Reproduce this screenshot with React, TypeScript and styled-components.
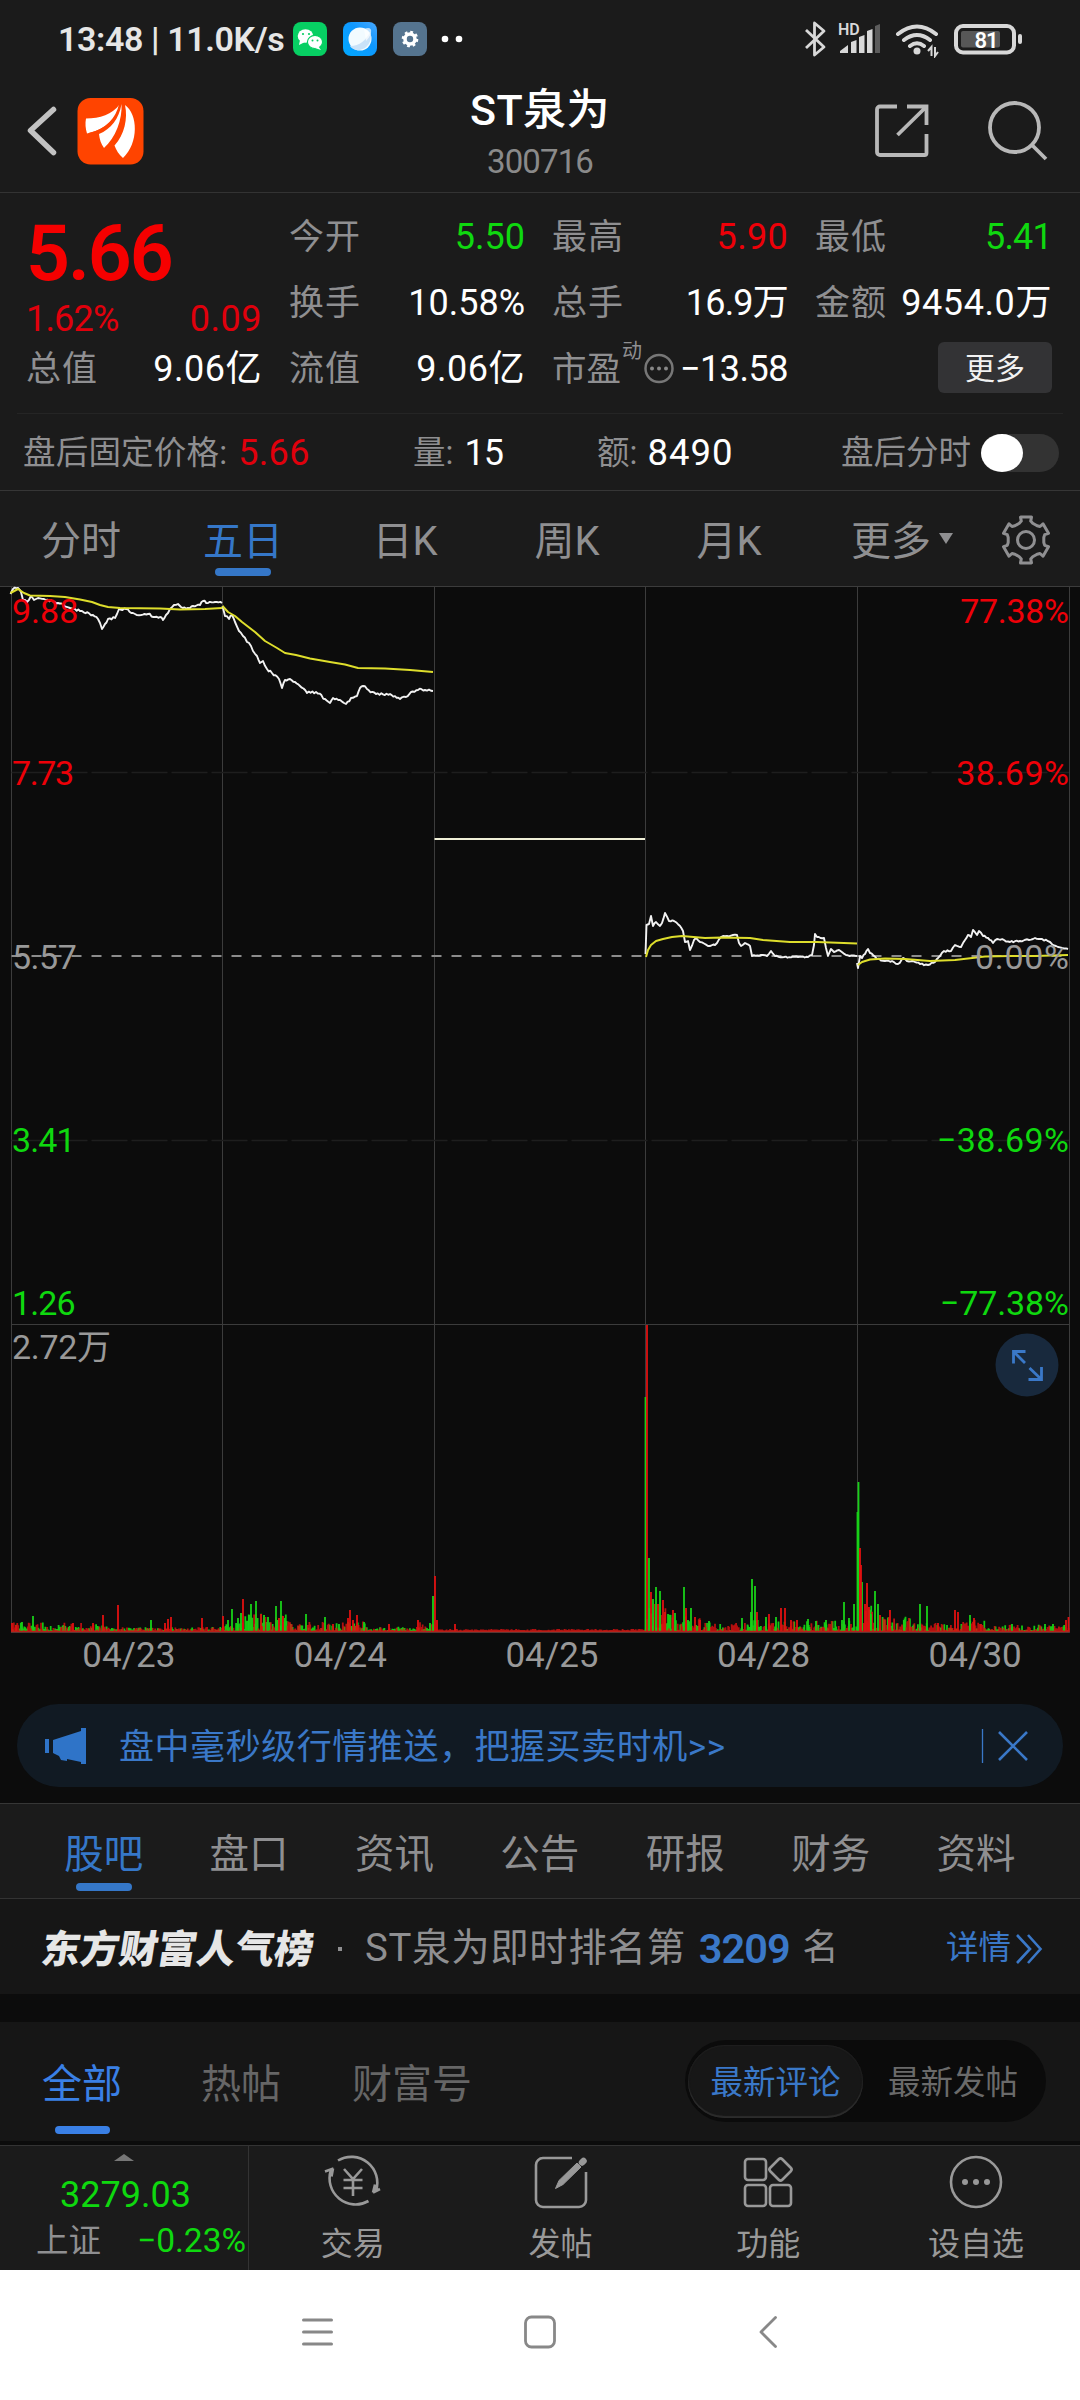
import React from "react";
import styled, { createGlobalStyle } from "styled-components";

const RED = "#ee0008";
const GREEN = "#0fd80f";
const BLUE = "#3577c8";
const GREY = "#8f8f91";

const Global = createGlobalStyle`
  body { margin: 0; background: #0c0c0c; }
  * { box-sizing: border-box; }
`;

const Screen = styled.div`
  width: 1080px;
  height: 2400px;
  display: flex;
  flex-direction: column;
  background: #0c0c0c;
  overflow: hidden;
  font-family: Roboto, "Noto Sans CJK SC", sans-serif;
  white-space: nowrap;
`;

const Text = styled.span<{ $size: number; $color?: string; $weight?: number; $ls?: number }>`
  font-size: ${(p) => p.$size}px;
  color: ${(p) => p.$color ?? GREY};
  font-weight: ${(p) => p.$weight ?? 400};
  letter-spacing: ${(p) => p.$ls ?? 0}px;
  line-height: 1.1;
`;

/* ---------- status bar ---------- */
const StatusBar = styled.div`
  height: 78px;
  flex: none;
  background: #1b1b1b;
  display: flex;
  align-items: center;
  padding: 0 57px 0 58px;
`;
const Clock = styled(Text)`
  width: 228px;
  padding-top: 2px;
`;
const StatusIcons = styled.svg`
  margin-left: 7px;
  flex: none;
`;
const Spacer = styled.div`
  flex: 1;
`;

/* ---------- header ---------- */
const Header = styled.header`
  height: 115px;
  flex: none;
  background: #1b1b1b;
  border-bottom: 1px solid #333;
  display: grid;
  grid-template-columns: 360px 1fr 360px;
`;
const HeaderSide = styled.div`
  display: flex;
  align-items: flex-start;
`;
const TitleBlock = styled.div`
  display: flex;
  flex-direction: column;
  align-items: center;
  padding-top: 9px;
  gap: 10px;
`;

/* ---------- quote ---------- */
const Quote = styled.section`
  height: 220px;
  flex: none;
  background: #1b1b1b;
  padding: 12px 28px 0 26px;
  display: grid;
  grid-template-columns: 236px 236px 236px 237px;
  column-gap: 27px;
`;
const QuoteColumn = styled.div`
  display: flex;
  flex-direction: column;
`;
const QuoteCell = styled.div<{ $h?: number }>`
  height: ${(p) => p.$h ?? 66}px;
  display: flex;
  align-items: center;
  justify-content: space-between;
`;
const Label = styled(Text).attrs({ $size: 35, $ls: 1 })``;
const PeLabel = styled.div`
  display: flex;
  align-items: center;
  gap: 1px;
`;
const Sup = styled(Text)`
  align-self: flex-start;
  margin-top: -11px;
`;
const PeIcon = styled.svg`
  margin-top: -3px;
`;
const MoreButton = styled.button`
  width: 114px;
  height: 51px;
  border: 0;
  border-radius: 6px;
  margin-left: auto;
  margin-top: -5px;
  background: #333335;
  padding: 2px 0 0;
  font-family: inherit;
`;

const AfterHours = styled.section`
  height: 78px;
  flex: none;
  background: #1b1b1b;
  border-bottom: 1px solid #363636;
  padding: 0 17px;
`;
const AfterInner = styled.div`
  height: 77px;
  border-top: 1px solid #252525;
  padding: 2px 4px 0 6px;
  display: grid;
  grid-template-columns: 390px 184px 244px 1fr;
  align-items: center;
`;
const Pair = styled.div<{ $gap: number }>`
  display: flex;
  align-items: center;
  gap: ${(p) => p.$gap}px;
  padding-top: 1px;
`;
const Track = styled.div`
  width: 78px;
  height: 38px;
  border-radius: 19px;
  background: #333;
  margin-top: -2px;
`;
const Knob = styled.div`
  width: 42px;
  height: 38px;
  border-radius: 50%;
  background: #fff;
`;

/* ---------- tabs ---------- */
const TabBar = styled.nav<{ $pad: number; $line?: boolean }>`
  height: 95px;
  flex: none;
  background: #1b1b1b;
  border-top: ${(p) => (p.$line ? "1px solid #363636" : "none")};
  display: flex;
  padding: 0 ${(p) => p.$pad}px;
`;
const Tab = styled.div<{ $w: number; $active?: boolean; $bar: number; $top?: number }>`
  width: ${(p) => p.$w}px;
  position: relative;
  display: flex;
  align-items: center;
  justify-content: center;
  padding-top: ${(p) => p.$top ?? 3}px;
  &::after {
    content: "";
    display: ${(p) => (p.$active ? "block" : "none")};
    position: absolute;
    left: calc(50% - 28px);
    bottom: ${(p) => p.$bar}px;
    width: 56px;
    height: 8px;
    border-radius: 4px;
    background: ${BLUE};
  }
`;
const Caret = styled.i`
  position: absolute;
  left: 129px;
  top: 42px;
  border: 7.5px solid transparent;
  border-top: 11px solid ${GREY};
  border-bottom: 0;
`;

/* ---------- chart ---------- */
const Chart = styled.section`
  height: 1118px;
  flex: none;
  position: relative;
`;
const ChartSvg = styled.svg`
  display: block;
`;
const Axis = styled.div<{ $y: number; $side: "left" | "right"; $color: string; $ls: number }>`
  position: absolute;
  top: ${(p) => p.$y - 586 - 20}px;
  ${(p) => p.$side}: ${(p) => (p.$side === "left" ? 12 : 11 - p.$ls)}px;
  line-height: 40px;
  font-size: 34px;
  letter-spacing: ${(p) => p.$ls}px;
  color: ${(p) => p.$color};
`;
const Dates = styled.div`
  display: grid;
  grid-template-columns: repeat(5, 211.6px);
  padding-left: 23px;
  text-align: center;
  font-size: 35px;
  line-height: 40px;
  color: #999;
  padding-top: 2px;
`;
const Expand = styled.svg`
  position: absolute;
  left: 995px;
  top: 747px;
`;

/* ---------- banner ---------- */
const BannerWrap = styled.div`
  height: 99px;
  flex: none;
  padding: 0 17px;
`;
const Banner = styled.div`
  height: 83px;
  border-radius: 42px;
  background: #111a23;
  display: flex;
  align-items: center;
  padding-left: 28px;
`;
const BannerText = styled(Text)`
  margin-left: 32px;
  padding-top: 5px;
  flex: 1;
`;
const BannerClose = styled.svg`
  margin-right: 34px;
`;

/* ---------- rank ---------- */
const Rank = styled.div`
  height: 96px;
  flex: none;
  background: #161616;
  border-top: 1px solid #333;
  display: flex;
  align-items: center;
  padding: 4px 36px 0 42px;
`;
const RankTitle = styled.span`
  font-size: 38.8px;
  font-weight: 900;
  line-height: 44px;
  color: #e6e6e6;
  transform: skewX(-9deg);
  width: 274px;
  padding-top: 3px;
`;
const Dot = styled.i`
  width: 4px;
  height: 4px;
  background: ${GREY};
  margin: 0 23px 0 22px;
`;
const RankNo = styled(Text)`
  margin: 0 13px;
`;

/* ---------- posts ---------- */
const Posts = styled.div`
  height: 119px;
  flex: none;
  margin-top: 28px;
  background: #161616;
  display: flex;
  padding: 0 34px 0 42px;
`;
const PostTab = styled.div<{ $gap: number; $active?: boolean }>`
  position: relative;
  padding-top: 41px;
  margin-right: ${(p) => p.$gap}px;
  &::after {
    content: "";
    display: ${(p) => (p.$active ? "block" : "none")};
    position: absolute;
    left: 13px;
    top: 104px;
    width: 55px;
    height: 8px;
    border-radius: 4px;
    background: #3a80e6;
  }
`;
const Segmented = styled.div`
  margin: 18px 0 0 auto;
  width: 361px;
  height: 82px;
  border-radius: 41px;
  background: #0b0b0b;
  padding: 5px 3px;
  display: flex;
`;
const Segment = styled.div<{ $on?: boolean }>`
  width: ${(p) => (p.$on ? 175 : 180)}px;
  height: 73px;
  border-radius: 37px;
  padding-top: 4px;
  display: flex;
  align-items: center;
  justify-content: center;
  background: ${(p) => (p.$on ? "#171717" : "transparent")};
  box-shadow: ${(p) => (p.$on ? "inset 0 -2px 1px #2c2c2c, inset 0 0 1px 1px #1e1e1e" : "none")};
`;

/* ---------- bottom ---------- */
const Bottom = styled.footer`
  height: 125px;
  flex: none;
  margin-top: 4px;
  background: #1b1b1b;
  border-top: 1px solid #333;
  display: flex;
`;
const IndexCell = styled.div`
  width: 249px;
  border-right: 1px solid #333;
  display: flex;
  flex-direction: column;
  align-items: center;
`;
const Up = styled.i`
  margin: 8px 0 0 0;
  border: 10px solid transparent;
  border-top: 0;
  border-bottom: 7px solid #777;
`;
const IndexValue = styled(Text)`
  margin: 13px 0 0 3px;
  line-height: 42px;
`;
const IndexRow = styled.div`
  width: 100%;
  display: flex;
  align-items: center;
  justify-content: space-between;
  padding: 7px 2px 0 36px;
`;
const Action = styled.div`
  flex: 1;
  display: flex;
  flex-direction: column;
  align-items: center;
  padding-top: 7px;
  gap: 16px;
`;
const SystemNav = styled.div`
  height: 130px;
  flex: none;
  background: #fff;
  display: grid;
  grid-template-columns: 1fr 32px 1fr;
  align-items: center;
  padding-bottom: 6px;
`;
const NavItem = styled.div<{ $left?: number }>`
  padding-left: ${(p) => p.$left ?? 0}px;
  display: flex;
`;

/* ---------- chart data ---------- */
const X = [11.5, 222.5, 434.5, 645.5, 857.5, 1069.5];
const BASE = 1632;

const jitter = (pts: number[][], seed: number, amp: number) => {
  let s = seed;
  const rnd = () => ((s = (s * 16807) % 2147483647) / 2147483647 - 0.5) * 2;
  const out: string[] = [];
  for (let i = 0; i < pts.length - 1; i++) {
    const [x0, y0] = pts[i];
    const [x1, y1] = pts[i + 1];
    const n = Math.max(1, Math.round((x1 - x0) / 1.8));
    for (let k = 0; k < n; k++) {
      const t = k / n;
      out.push(`${(x0 + (x1 - x0) * t).toFixed(1)},${(y0 + (y1 - y0) * t + (k ? rnd() * amp : 0)).toFixed(1)}`);
    }
  }
  out.push(pts[pts.length - 1].join(","));
  return out.join(" ");
};

const day1 = [[10.5, 594], [13, 589], [18, 588], [21, 592], [23, 600], [27, 602], [31, 596], [34, 600], [38, 598], [46, 600], [58, 603], [70, 608], [80, 611], [93, 615], [98, 619], [100, 623], [102, 629], [105, 624], [108, 619], [115, 618], [119, 609], [126, 609], [133, 613], [141, 615], [148, 614], [155, 617], [160, 617], [163, 620], [166, 615], [170, 609], [174, 605], [178, 604], [181, 607], [188, 608], [193, 606], [200, 605], [203, 601], [208, 603], [215, 602], [222, 603]];
const day2 = [[222.5, 606], [225, 616], [229, 619], [232, 615], [235, 622], [239, 631], [243, 636], [247, 642], [251, 646], [253, 651], [257, 656], [260, 663], [263, 661], [267, 669], [272, 673], [279, 679], [282, 688], [285, 680], [290, 679], [295, 682], [300, 686], [307, 693], [316, 692], [325, 699], [330, 703], [333, 698], [340, 700], [346, 704], [351, 698], [357, 696], [360, 688], [363, 686], [367, 689], [376, 694], [390, 694], [400, 699], [406, 697], [411, 692], [418, 690], [425, 690], [433, 691]];
const day4 = [[645.5, 954], [646.5, 925], [649, 924], [651, 916], [653, 926], [656, 922], [660, 926], [662, 923], [665, 913], [669, 921], [674, 921], [680, 926], [683, 931], [685, 942], [688, 941], [690, 950], [694, 940], [696, 938], [700, 942], [708, 946], [715, 945], [721, 937], [727, 936], [733, 935], [737, 935], [739, 943], [741, 946], [745, 943], [750, 946], [752, 956], [761, 955], [767, 956], [771, 951], [775, 956], [784, 957], [798, 957], [808, 957], [812, 955], [814, 945], [815, 934], [817, 937], [824, 938], [826, 948], [828, 956], [831, 949], [834, 952], [839, 950], [846, 955], [857, 956]];
const day5 = [[857, 963], [858, 968], [860, 956], [862, 958], [865, 954], [868, 949], [870, 953], [873, 955], [877, 959], [885, 961], [892, 961], [898, 964], [903, 958], [907, 961], [913, 961], [920, 964], [928, 965], [935, 962], [940, 956], [944, 951], [951, 951], [955, 945], [961, 947], [965, 940], [968, 935], [971, 937], [973, 930], [977, 935], [979, 931], [983, 936], [988, 938], [993, 943], [997, 939], [1004, 940], [1010, 942], [1020, 941], [1029, 940], [1035, 938], [1042, 939], [1050, 942], [1056, 946], [1062, 948], [1068, 949]];
const whites = [jitter(day1, 11, 1.1), jitter(day2, 23, 1.3), jitter(day4, 5, 0.8), jitter(day5, 77, 0.9)];

const yellows = [
  "10.5,593 18,589 24,593 30,595.5 50,596 65,597 80,599.5 92,602 100,605 108,607 120,608 160,608.5 180,609.5 205,609 222,608",
  "222.5,606 228,612 235,616 242,622 255,632 265,641 277,648 285,653 296,655 310,658.5 330,662 345,664.5 358,668 385,668.5 410,670 433,672",
  "646,957 648,950 651,945 656,941 663,939 672,937 682,936 705,938 722,937.5 750,938 763,940 790,942 817,942 857,943.5",
  "858,965 862,962 870,959.5 885,958.5 905,959 930,961 955,960 968,958.5 985,956.5 1010,956 1035,956 1068,955",
];

type Bar = [number, number, boolean];
// x, height, isGreen
const peaks: Bar[] = [
  [12, 9, false], [16, 7, false], [22, 10, true], [33, 16, true], [73, 9, false], [93, 9, false], [103, 17, false], [118, 27, false], [151, 12, true], [165, 9, false], [168, 13, false], [171, 15, false], [202, 14, false], [223, 16, false],
  [228, 12, true], [232, 23, true], [238, 14, true], [243, 33, false], [241, 19, true], [251, 28, true], [256, 31, true], [249, 17, true], [261, 18, false], [264, 17, true], [268, 15, true], [276, 26, true], [281, 31, true], [283, 16, false], [279, 14, false], [306, 18, true], [325, 15, true], [333, 8, false], [339, 8, true], [348, 14, false], [350, 22, false], [353, 12, false], [357, 17, false], [364, 10, true], [389, 8, false], [418, 12, false], [430, 9, true], [433, 36, true], [435, 56, false], [437, 12, false], [455, 8, false],
  [645.5, 235, true], [647, 307, false], [649, 74, true], [651, 40, false], [653, 33, true], [656, 45, true], [658, 28, false], [660, 41, true], [663, 32, false], [665, 20, false], [673, 22, false], [675, 19, true], [684, 45, true], [686, 24, false], [688, 12, true], [691, 24, true], [695, 15, false], [700, 12, false], [709, 11, true], [742, 14, true], [751, 20, true], [752, 53, true], [755, 46, true], [757, 20, false], [766, 15, true], [769, 18, false], [776, 15, true], [781, 24, false], [785, 24, false], [791, 12, false], [797, 12, false], [808, 13, true], [816, 11, true], [826, 12, true], [842, 12, true], [844, 30, true], [849, 14, true], [854, 28, true],
  [857.5, 120, true], [858.5, 150, true], [860, 84, false], [861, 67, false], [862, 50, true], [865, 28, false], [867, 49, false], [869, 25, false], [871, 18, true], [875, 41, true], [878, 28, true], [880, 17, false], [889, 13, false], [890, 22, false], [904, 12, true], [920, 28, true], [927, 26, true], [938, 9, false], [955, 22, false], [958, 20, false], [970, 17, true], [974, 14, false], [981, 8, false], [1012, 8, true], [1045, 8, true], [1053, 8, true], [1066, 12, false], [1068.5, 15, false],
];
const zones: [number, number, number, number][] = [
  [12, 60, 8, 0.6], [60, 120, 8, 0.5], [120, 222, 3.5, 0.4], [222, 240, 9, 0.6], [240, 290, 17, 0.6], [290, 365, 9, 0.5], [365, 420, 4, 0.5], [420, 434, 9, 0.5], [436, 645, 1.6, 0],
  [646, 668, 27, 0.5], [668, 700, 16, 0.5], [700, 748, 8, 0.3], [748, 760, 16, 0.6], [760, 800, 9, 0.4], [800, 857, 10, 0.5], [858, 880, 27, 0.4], [880, 910, 14, 0.4], [910, 950, 8, 0.3], [950, 985, 11, 0.3], [985, 1069, 6, 0.5],
];
const noise: Bar[] = (() => {
  let s = 4242;
  const rnd = () => (s = (s * 16807) % 2147483647) / 2147483647;
  const out: Bar[] = [];
  zones.forEach(([a, b, h, g]) => {
    for (let x = a; x < b; x += 0.88) out.push([x, 1.5 + h * Math.pow(rnd(), 1.7), rnd() < g]);
  });
  return out;
})();
const barPath = (green: boolean, bars: Bar[]) =>
  bars.filter((b) => b[2] === green).map(([x, h]) => `M${x.toFixed(1)} ${BASE}v${(-h).toFixed(1)}`).join("");

const axis: [number, "left" | "right", string, string, number][] = [
  [611, "left", RED, "9.88", 0], [773, "left", RED, "7.73", -1.4], [957, "left", "#999", "5.57", -0.5], [1140, "left", GREEN, "3.41", -0.9], [1303, "left", GREEN, "1.26", -0.9], [1347, "left", "#999", "2.72万", -0.3],
  [611, "right", RED, "77.38%", -0.3], [773, "right", RED, "38.69%", 0.5], [957, "right", "#999", "0.00%", 0.7], [1140, "right", GREEN, "−38.69%", 0.4], [1303, "right", GREEN, "−77.38%", -0.1],
];

const GearIcon = () => {
  const pts: string[] = [];
  for (let i = 0; i < 6; i++) {
    const a = i * 60 - 90;
    [[-22, 18], [-14, 19.5], [-13.5, 23.5], [13.5, 23.5], [14, 19.5], [22, 18]].forEach(([d, r]) => {
      const rad = ((a + d) * Math.PI) / 180;
      pts.push(`${(26 + r * Math.cos(rad)).toFixed(1)},${(26 + r * Math.sin(rad)).toFixed(1)}`);
    });
  }
  return (
    <svg width="52" height="52" fill="none" stroke={GREY} strokeWidth="3" strokeLinejoin="round">
      <polygon points={pts.join(" ")} />
      <circle cx="26" cy="26" r="8.5" />
    </svg>
  );
};

type Datum = [string, string, string, number];
const quoteColumns: Datum[][] = [
  [["今开", "5.50", GREEN, 0], ["换手", "10.58%", "#fff", 0], ["流值", "9.06亿", "#fff", 0.5]],
  [["最高", "5.90", RED, 0.3], ["总手", "16.9万", "#fff", -0.8]],
  [["最低", "5.41", GREEN, -0.8], ["金额", "9454.0万", "#fff", 0.6]],
];

const Cell = ({ d }: { d: Datum }) => (
  <QuoteCell>
    <Label>{d[0]}</Label>
    <Text $size={36} $color={d[2]} $ls={d[3]}>{d[1]}</Text>
  </QuoteCell>
);

const actions: [string, React.ReactNode][] = [
  ["交易", <g key="t"><path d="M14 7.500A26 26 0 0 1 52 38M49 39.500l7-3.500M51 31.500l-2 8M44.500 48A26 26 0 0 1 7 17M1 18.500l8.500-3M9 15.500l-1.500 8M20 16l9 10 9-10M29 26v17M19.500 27h19M19.500 35h19" /></g>],
  ["发帖", <g key="p"><path d="M40 5H11a7 7 0 0 0-7 7v35a7 7 0 0 0 7 7h36a7 7 0 0 0 7-7V19" /><path d="M23.500 35.500l3.500-8 18-17.500 4 4-18 17.500z" fill="#999" strokeWidth="1" /><path d="M50 9.500l1.500-1.500" strokeWidth="6.500" strokeLinecap="round" /></g>],
  ["功能", <g key="f"><rect x="6" y="6" width="21" height="21" rx="3" /><rect x="6" y="32" width="21" height="21" rx="3" /><rect x="31" y="32" width="21" height="21" rx="3" /><rect x="33" y="8" width="17" height="17" rx="2.500" transform="rotate(45 41.500 16.500)" /></g>],
  ["设自选", <g key="s"><circle cx="29" cy="29" r="25" /><g fill="#999" stroke="none"><circle cx="18" cy="29" r="3" /><circle cx="29" cy="29" r="3" /><circle cx="40" cy="29" r="3" /></g></g>],
];

export default function App() {
  return (
    <Screen>
      <Global />
      <StatusBar>
        <Clock $size={34} $color="#e6e6e6" $weight={600} $ls={-0.4}>13:48 | 11.0K/s</Clock>
        <StatusIcons width="175" height="34" viewBox="293 22 175 34">
          <rect x="293" y="22" width="34" height="34" rx="8" fill="#07cf63" />
          <ellipse cx="305.500" cy="36" rx="7.800" ry="6.800" fill="#fff" />
          <path d="M300 40l-1 5 6-3z" fill="#fff" />
          <ellipse cx="315" cy="42" rx="7.600" ry="6.600" fill="#fff" stroke="#07cf63" strokeWidth="1.200" />
          <path d="M318 46l3 4-6-2z" fill="#fff" />
          <g fill="#07cf63"><circle cx="303" cy="34" r="1.100" /><circle cx="309" cy="34" r="1.100" /><circle cx="312.500" cy="40.500" r="1" /><circle cx="317.500" cy="40.500" r="1" /></g>
          <linearGradient id="sky" x1="0" y1="1" x2="1" y2="0"><stop offset="0" stopColor="#00a8ff" /><stop offset=".6" stopColor="#0f98ff" /><stop offset="1" stopColor="#4aa8ff" /></linearGradient>
          <rect x="343" y="22" width="34" height="34" rx="8" fill="url(#sky)" />
          <circle cx="360" cy="39" r="11.500" fill="#f2fbff" />
          <path d="M370 32c3 9-3 18-12 18-4 0-7-2-8-4 10 0 16-6 20-14z" fill="#c9e2f8" />
          <path d="M364 29c5-2 8-1 7 4-1 3-3 6-5 8z" fill="#fff" opacity=".7" />
          <rect x="393" y="22" width="34" height="34" rx="8" fill="#55748f" />
          <circle cx="410" cy="39" r="5" fill="none" stroke="#fff" strokeWidth="3.600" />
          <circle cx="410" cy="39" r="7" fill="none" stroke="#fff" strokeWidth="2.600" strokeDasharray="2.750 2.750" />
          <circle cx="445" cy="39" r="3.300" fill="#fff" /><circle cx="459" cy="39" r="3.300" fill="#fff" />
        </StatusIcons>
        <Spacer />
        <svg width="219" height="38" viewBox="804 20 219 38" fill="none">
          <path d="M806 30l18 17-9.500 8V23l9.500 8-18 17" stroke="#d8d8d8" strokeWidth="2.800" strokeLinejoin="round" />
          <text x="838" y="34.500" fontFamily="Roboto, sans-serif" fontSize="16" fontWeight="600" fill="#d8d8d8">HD</text>
          <path d="M840 53v-2l8-6v8zM851 53V42l5.500-2v13zM859 53V37l5.500-2v18zM867 53V31l5.500-2v24z" fill="#d8d8d8" />
          <path d="M875 53V26l5-2v29z" fill="#5c5c5c" />
          <g stroke="#d8d8d8" strokeWidth="4" strokeLinecap="round"><path d="M898 34q19-15 38 0M904 40q13-10 26 0M910 46q7-5.500 14 0" /></g>
          <circle cx="917" cy="51" r="3.500" fill="#d8d8d8" />
          <path d="M931.500 56v-9l-3.500 4M935 47v9l3-4" stroke="#d8d8d8" strokeWidth="2" />
          <rect x="956" y="26" width="58" height="26.500" rx="7" stroke="#d8d8d8" strokeWidth="4" />
          <rect x="961" y="31" width="39" height="16.500" rx="2" fill="#575757" />
          <rect x="1018" y="34" width="4" height="10" rx="2" fill="#d8d8d8" />
          <text x="974.500" y="47.500" fontFamily="Roboto, sans-serif" fontSize="22" fontWeight="600" letterSpacing="-1" fill="#fff">81</text>
        </svg>
      </StatusBar>

      <Header>
        <HeaderSide>
          <svg width="160" height="100" viewBox="0 78 160 100" fill="none">
            <path d="M53.500 109.500L30.500 130.500 53.500 152.500" stroke="#c2c2c2" strokeWidth="5.500" strokeLinecap="round" strokeLinejoin="round" />
            <rect x="77.500" y="98" width="66" height="66.500" rx="13" fill="#ff4400" />
            <path d="M86 118.500c14 0 26-4 34-14.500-3 13-12 25-33 29.500-1.500-5-2-10-1-15z" fill="#fff" />
            <path d="M121.500 104c1 15-6 34-17.500 44-3-4-4.500-9-5-14 12-5 20-15 22.500-30z" fill="#fff" />
            <path d="M125 105c13 9 14 38-2 53-4-3.500-7-8-8.500-12.500 10-11 13.500-27 10.500-40.500z" fill="#fff" />
            <path d="M120 104c-3 14-13 26-31 30M123.500 104c3 16-4 33-17 44" stroke="#ff4400" strokeWidth="1.800" />
          </svg>
        </HeaderSide>
        <TitleBlock>
          <Text $size={43} $color="#fff" $weight={500} $ls={0.5}>ST泉为</Text>
          <Text $size={33} $color="#8a8a8a" $ls={-0.9}>300716</Text>
        </TitleBlock>
        <HeaderSide>
          <svg width="360" height="100" viewBox="720 78 360 100" fill="none" stroke="#b8b8b8" strokeWidth="3.800">
            <path d="M897 106.500H880a3 3 0 0 0-3 3V152a3 3 0 0 0 3 3h44.500a2 2 0 0 0 2-2V134M907 106.500h19.500V125M925 108l-27.500 27" />
            <circle cx="1014.500" cy="127.500" r="24.500" />
            <path d="M1032 145l14 14" />
          </svg>
        </HeaderSide>
      </Header>

      <Quote>
        <QuoteColumn>
          <QuoteCell $h={98}><Text $size={77} $color="#f60000" $weight={600} $ls={-2}>5.66</Text></QuoteCell>
          <QuoteCell $h={34}>
            <Text $size={36} $color="#e0000c" $ls={-0.8}>1.62%</Text>
            <Text $size={36} $color="#e0000c" $ls={0.5}>0.09</Text>
          </QuoteCell>
          <Cell d={["总值", "9.06亿", "#fff", 0.5]} />
        </QuoteColumn>
        <QuoteColumn>{quoteColumns[0].map((d) => <Cell key={d[0]} d={d} />)}</QuoteColumn>
        <QuoteColumn>
          {quoteColumns[1].map((d) => <Cell key={d[0]} d={d} />)}
          <QuoteCell>
            <PeLabel>
              <Text $size={34.5}>市盈</Text>
              <Sup $size={20}>动</Sup>
              <PeIcon width="31" height="31" fill="none" stroke="#777" strokeWidth="2.500">
                <circle cx="16" cy="15.500" r="13.500" />
                <g fill="#888" stroke="none"><circle cx="9" cy="15.500" r="2" /><circle cx="16" cy="15.500" r="2" /><circle cx="23" cy="15.500" r="2" /></g>
              </PeIcon>
            </PeLabel>
            <Text $size={36} $color="#fff" $ls={-0.5}>−13.58</Text>
          </QuoteCell>
        </QuoteColumn>
        <QuoteColumn>
          {quoteColumns[2].map((d) => <Cell key={d[0]} d={d} />)}
          <QuoteCell><MoreButton><Text $size={30} $color="#f2f2f2">更多</Text></MoreButton></QuoteCell>
        </QuoteColumn>
      </Quote>

      <AfterHours>
        <AfterInner>
          <Pair $gap={11}><Text $size={32.5} $ls={0.2}>盘后固定价格:</Text><Text $size={36} $color="#e0000c" $ls={0.3}>5.66</Text></Pair>
          <Pair $gap={11}><Text $size={32.5}>量:</Text><Text $size={36} $color="#fff" $ls={-0.8}>15</Text></Pair>
          <Pair $gap={10}><Text $size={32.5}>额:</Text><Text $size={36.5} $color="#fff" $ls={1}>8490</Text></Pair>
          <Pair $gap={10}><Text $size={32.5}>盘后分时</Text><Track><Knob /></Track></Pair>
        </AfterInner>
      </AfterHours>

      <TabBar $pad={0}>
        {["分时", "五日", "日K", "周K", "月K", "更多"].map((t) => (
          <Tab key={t} $w={162} $bar={10} $top={6} $active={t === "五日"}>
            <Text $size={40} $color={t === "五日" ? BLUE : GREY}>{t}</Text>
            {t === "更多" && <Caret />}
          </Tab>
        ))}
        <Tab $w={108} $bar={0}><GearIcon /></Tab>
      </TabBar>

      <Chart>
        <ChartSvg width="1080" height="1048" viewBox="0 586 1080 1048" fill="none">
          <g stroke="#3c3c3c" strokeWidth="1">
            <path d="M0 586.500H1080M11 1324.500H1070M11 1632.500H1070" />
            {X.map((x) => <path key={x} d={`M${x} 586V1632`} />)}
          </g>
          <path d="M11.500 772.500H1069M11.500 1140.500H1069" stroke="#1e1e1e" strokeWidth="1.500" strokeDasharray="36 4" />
          <path d="M11.500 956H1069" stroke="#8c8c8c" strokeWidth="1.800" strokeDasharray="10 10" />
          <g strokeWidth="1.800">
            <path d={barPath(true, noise)} stroke="#12c812" />
            <path d={barPath(false, noise)} stroke="#e01010" strokeOpacity=".8" />
            <path d={barPath(true, peaks)} stroke="#18d018" />
            <path d={barPath(false, peaks)} stroke="#e01010" />
            <path d="M11 1631.500H1069" stroke="#b82018" strokeWidth="1.500" />
          </g>
          {whites.map((p, i) => <polyline key={i} points={p} stroke="#f2f2f2" strokeWidth="1.900" strokeLinejoin="round" />)}
          <path d="M434.500 839H645" stroke="#f0f0d8" strokeWidth="2" />
          {yellows.map((p) => <polyline key={p} points={p} stroke="#dede2c" strokeWidth="2" strokeLinejoin="round" />)}
        </ChartSvg>
        {axis.map(([y, side, color, t, ls]) => <Axis key={t} $y={y} $side={side} $color={color} $ls={ls}>{t}</Axis>)}
        <Expand width="64" height="64" viewBox="995.500 1333.500 64 64" fill="none" stroke="#3a78c8" strokeWidth="2.800">
          <circle cx="1027.500" cy="1365.500" r="31.500" fill="#18293d" stroke="none" />
          <path d="M1026 1352h-12v12M1014 1352l11.500 11.500M1029 1380h13v-12.500M1042 1380l-12-11.500" />
        </Expand>
        <Dates>{["04/23", "04/24", "04/25", "04/28", "04/30"].map((d) => <span key={d}>{d}</span>)}</Dates>
      </Chart>

      <BannerWrap>
        <Banner>
          <svg width="42" height="38" viewBox="45 1726 42 38" fill="#2f74c8">
            <path d="M45 1738h4v14h-4zM53 1739l28-9v-3h5v36h-5v-2l-14-3v2l-6-1-2-4-6-3z" />
          </svg>
          <BannerText $size={35} $color="#3a78c8" $ls={0.55}>盘中毫秒级行情推送，把握买卖时机&gt;&gt;</BannerText>
          <BannerClose width="48" height="36" viewBox="981 1727 48 36" stroke="#3a78c8" fill="none">
            <path d="M982.500 1728v34" strokeWidth="1.300" />
            <path d="M999 1731l28 28M1027 1731l-28 28" strokeWidth="2.600" />
          </BannerClose>
        </Banner>
      </BannerWrap>

      <TabBar $pad={31} $line>
        {["股吧", "盘口", "资讯", "公告", "研报", "财务", "资料"].map((t) => (
          <Tab key={t} $w={145.4} $bar={7} $top={7} $active={t === "股吧"}>
            <Text $size={39.5} $color={t === "股吧" ? BLUE : GREY}>{t}</Text>
          </Tab>
        ))}
      </TabBar>

      <Rank>
        <RankTitle>东方财富人气榜</RankTitle>
        <Dot />
        <Text $size={38.4} $ls={0.7}>ST泉为即时排名第</Text>
        <RankNo $size={41.5} $color="#3a78c8" $weight={600} $ls={-1}>3209</RankNo>
        <Text $size={36}>名</Text>
        <Spacer />
        <Text $size={32.5} $color="#3a78c8">详情</Text>
        <svg width="33" height="32" fill="none" stroke="#3a78c8" strokeWidth="2.600"><path d="M6 2l13 14L6 30M17 2l12.500 14L17 30" /></svg>
      </Rank>

      <Posts>
        <PostTab $active $gap={79}><Text $size={40} $color="#3a80e6">全部</Text></PostTab>
        <PostTab $gap={71}><Text $size={40} $color="#666">热帖</Text></PostTab>
        <PostTab $gap={0}><Text $size={40} $color="#666">财富号</Text></PostTab>
        <Segmented>
          <Segment $on><Text $size={32.5} $color="#3a78c8">最新评论</Text></Segment>
          <Segment><Text $size={32.5} $color="#6a6a6a">最新发帖</Text></Segment>
        </Segmented>
      </Posts>

      <Bottom>
        <IndexCell>
          <Up />
          <IndexValue $size={36} $color={GREEN}>3279.03</IndexValue>
          <IndexRow>
            <Text $size={32.5}>上证</Text>
            <Text $size={33.5} $color={GREEN}>−0.23%</Text>
          </IndexRow>
        </IndexCell>
        {actions.map(([t, icon]) => (
          <Action key={t}>
            <svg width="58" height="58" fill="none" stroke="#999" strokeWidth="2.600">{icon}</svg>
            <Text $size={32} $color="#999">{t}</Text>
          </Action>
        ))}
      </Bottom>

      <SystemNav>
        <NavItem $left={301}>
          <svg width="32" height="32" stroke="#888" strokeWidth="3" strokeLinecap="round"><path d="M2.500 4h28M2.500 16h28M2.500 28h28" /></svg>
        </NavItem>
        <NavItem>
          <svg width="32" height="34" fill="none" stroke="#888" strokeWidth="2.800"><rect x="1.500" y="2" width="29" height="30" rx="6" /></svg>
        </NavItem>
        <NavItem $left={202}>
          <svg width="20" height="34" fill="none" stroke="#888" strokeWidth="2.800" strokeLinecap="round" strokeLinejoin="round"><path d="M17.500 2.500L3 17l14.500 14.500" /></svg>
        </NavItem>
      </SystemNav>
    </Screen>
  );
}
